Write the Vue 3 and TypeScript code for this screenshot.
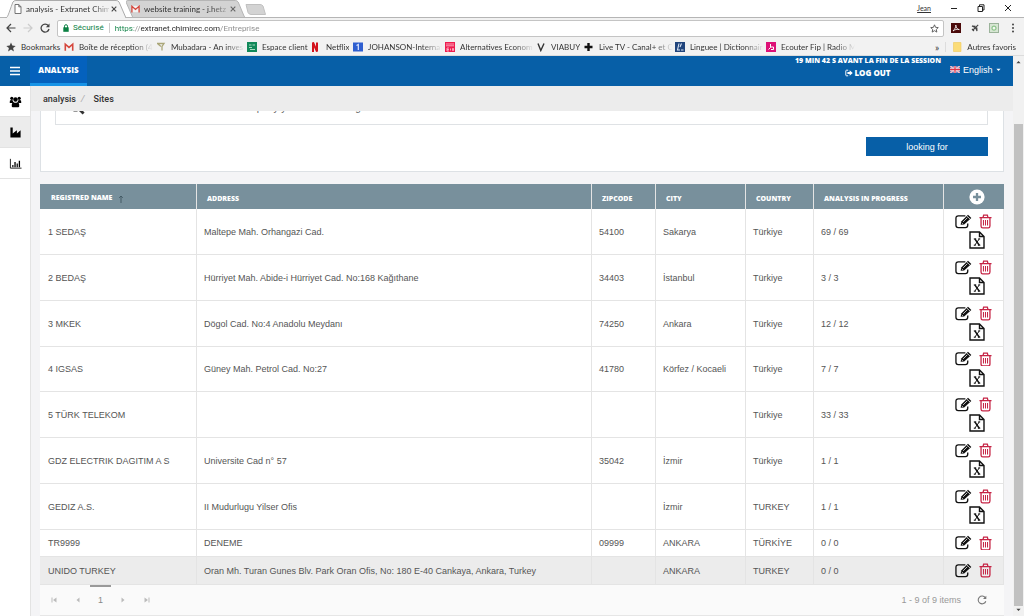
<script setup lang="ts">
import { ref } from 'vue'

interface Bookmark {
  icon: string
  label: string
}

interface Site {
  name: string
  address: string
  zip: string
  city: string
  country: string
  progress: string
  exportable: boolean
}

const url = ref('https://extranet.chimirec.com/Entreprise')
const search = ref('')
const language = ref('English')

const bookmarks: Bookmark[] = [
  { icon: 'star', label: 'Bookmarks' },
  { icon: 'gmail', label: 'Boîte de réception (4' },
  { icon: 'funnel', label: 'Mubadara - An inves' },
  { icon: 'bank', label: 'Espace client' },
  { icon: 'netflix', label: 'Netflix' },
  { icon: 'johanson', label: 'JOHANSON-Internat' },
  { icon: 'eco', label: 'Alternatives Econom' },
  { icon: 'viabuy', label: 'VIABUY' },
  { icon: 'plus', label: 'Live TV - Canal+ et C' },
  { icon: 'linguee', label: 'Linguee | Dictionnair' },
  { icon: 'fip', label: 'Ecouter Fip | Radio M' },
]

const columns = ['Address', 'Zipcode', 'City', 'Country', 'Analysis in progress']

const sites: Site[] = [
  { name: '1 SEDAŞ', address: 'Maltepe Mah. Orhangazi Cad.', zip: '54100', city: 'Sakarya', country: 'Türkiye', progress: '69 / 69', exportable: true },
  { name: '2 BEDAŞ', address: 'Hürriyet Mah. Abide-i Hürriyet Cad. No:168 Kağıthane', zip: '34403', city: 'İstanbul', country: 'Türkiye', progress: '3 / 3', exportable: true },
  { name: '3 MKEK', address: 'Dögol Cad. No:4 Anadolu Meydanı', zip: '74250', city: 'Ankara', country: 'Türkiye', progress: '12 / 12', exportable: true },
  { name: '4 IGSAS', address: 'Güney Mah. Petrol Cad. No:27', zip: '41780', city: 'Körfez / Kocaeli', country: 'Türkiye', progress: '7 / 7', exportable: true },
  { name: '5 TÜRK TELEKOM', address: '', zip: '', city: '', country: 'Türkiye', progress: '33 / 33', exportable: true },
  { name: 'GDZ ELECTRIK DAGITIM A S', address: 'Universite Cad n° 57', zip: '35042', city: 'İzmir', country: 'Türkiye', progress: '1 / 1', exportable: true },
  { name: 'GEDIZ A.S.', address: 'II Mudurlugu Yilser Ofis', zip: '', city: 'İzmir', country: 'TURKEY', progress: '1 / 1', exportable: true },
  { name: 'TR9999', address: 'DENEME', zip: '09999', city: 'ANKARA', country: 'TÜRKİYE', progress: '0 / 0', exportable: false },
  { name: 'UNIDO TURKEY', address: 'Oran Mh. Turan Gunes Blv. Park Oran Ofis, No: 180 E-40 Cankaya, Ankara, Turkey', zip: '', city: 'ANKARA', country: 'TURKEY', progress: '0 / 0', exportable: false },
]
</script>

<template>
  <div class="browser">
    <div class="titlebar">
      <div class="tab active">
        <svg class="tab-shape" viewBox="0 0 122 18" preserveAspectRatio="none" aria-hidden="true"><path d="M0 18C3 18 3 15 8 2Q9 0.5 11 0.5H112Q114 0.5 115 2L122 18" fill="#f2f2f2" stroke="#a9a9a9" /></svg>
        <svg class="tab-icon document" viewBox="0 0 8 10" aria-hidden="true"><path d="M1 .5H4.800L7 2.800V9.500H1ZM4.800 .5V2.800H7" fill="#fff" stroke="#666" stroke-width=".9" /></svg>
        <button class="tab-title">analysis - Extranet Chim</button>
        <button class="tab-close" aria-label="Close tab"><svg viewBox="0 0 6 6"><path d="M.7 .7 5.300 5.300M5.300 .7 .7 5.300" stroke="#444" stroke-width="1.100" /></svg></button>
      </div>
      <div class="tab">
        <svg class="tab-shape" viewBox="0 0 122 18" preserveAspectRatio="none" aria-hidden="true"><path d="M7 17.500L0 2Q0 .5 2 .5H112Q114 .5 115 2L121 16Q122 17.500 122 17.500Z" fill="#d3d3d3" stroke="#b4b4b4" /></svg>
        <svg class="tab-icon" viewBox="0 0 10 8" aria-hidden="true"><rect x=".5" y=".5" width="9" height="7" fill="#f3f3f3" /><path d="M1 8V1L5 4.500 9 1V8" fill="none" stroke="#d5473c" stroke-width="1.500" /></svg>
        <button class="tab-title">website training - j.hetz</button>
        <button class="tab-close" aria-label="Close tab"><svg viewBox="0 0 6 6"><path d="M.7 .7 5.300 5.300M5.300 .7 .7 5.300" stroke="#666" stroke-width="1.100" /></svg></button>
      </div>
      <button class="new-tab" aria-label="New tab"><svg viewBox="0 0 21 11"><path d="M1 .5H15Q17 .5 18 2L20.500 10.500H6Q4 10.500 3 8.500Z" fill="#d3d3d3" stroke="#c0c0c0" /></svg></button>
      <div class="window-buttons">
        <button class="account">Jean</button>
        <button aria-label="Minimise"><svg viewBox="0 0 8 8"><path d="M1 4.500H7" stroke="#222" /></svg></button>
        <button aria-label="Restore"><svg viewBox="0 0 8 8"><path d="M1 2.500H5.500V7.500H1ZM2.500 2.500V.800H7V6H5.500" fill="none" stroke="#222" /></svg></button>
        <button aria-label="Close"><svg viewBox="0 0 8 8"><path d="M1 1 7 7M7 1 1 7" stroke="#222" /></svg></button>
      </div>
    </div>

    <div class="toolbar">
      <button aria-label="Back"><svg viewBox="0 0 10 10"><path d="M9.500 5H1M5 1 1 5 5 9" fill="none" stroke="#444" stroke-width="1.200" /></svg></button>
      <button aria-label="Forward"><svg viewBox="0 0 10 10"><path d="M.5 5H9M5 1 9 5 5 9" fill="none" stroke="#ccc" stroke-width="1.200" /></svg></button>
      <button aria-label="Reload"><svg viewBox="0 0 10 10"><path d="M8.300 2.700A4 4 0 1 0 9 6" fill="none" stroke="#444" stroke-width="1.300" /><path d="M9.500 .5V4.200H5.800Z" fill="#444" /></svg></button>
      <div class="omnibox">
        <svg class="lock" viewBox="0 0 6 8" aria-hidden="true"><path d="M1.500 4V2.200a1.500 1.500 0 0 1 3 0V4" fill="none" stroke="#0b8043" /><rect x=".3" y="3.300" width="5.400" height="4.500" fill="#0b8043" /></svg>
        <span class="secure">Sécurisé</span>
        <input v-model="url" class="url" aria-label="Address" />
        <button class="fav" aria-label="Bookmark this page"><svg viewBox="0 0 10 10"><path d="M5 .9 6.200 3.700 9.200 4 7 6 7.600 9 5 7.400 2.400 9 3 6 .8 4 3.800 3.700Z" fill="none" stroke="#555" /></svg></button>
      </div>
      <div class="extensions">
        <button aria-label="Acrobat"><svg viewBox="0 0 10 10"><rect width="10" height="10" fill="#4a0a0a" /><path d="M2 8C4 6 5 4 4.800 2C5 5 6.500 6.500 8.300 6.600C6 6 4 6.500 2 8Z" fill="none" stroke="#fff" stroke-width=".8" /></svg></button>
        <button aria-label="Travel"><svg viewBox="0 0 10 10"><path d="M8.200 1.800 2.500 7.500M5 4.500 2 3 5.500 3.200M5.500 4.500 7 8 6.800 4.500M2 6 4 8" fill="none" stroke="#444" stroke-width="1.100" /></svg></button>
        <button aria-label="Capture"><svg viewBox="0 0 10 10"><rect x=".5" y=".5" width="9" height="9" fill="#d7e6d3" stroke="#9bb39a" /><circle cx="5" cy="5.200" r="2" fill="#f3f8f1" stroke="#8cc38a" stroke-width="1.200" /></svg></button>
        <button aria-label="Menu"><svg viewBox="0 0 10 10"><g fill="#444"><circle cx="5" cy="1.500" r="1" /><circle cx="5" cy="5" r="1" /><circle cx="5" cy="8.500" r="1" /></g></svg></button>
      </div>
    </div>

    <nav class="bookmarks" aria-label="Bookmarks">
      <a v-for="b in bookmarks" :key="b.label" href="#" class="bookmark">
        <svg viewBox="0 0 10 10" aria-hidden="true">
          <path v-if="b.icon === 'star'" d="M5 .5 6.300 3.600 9.700 3.900 7.100 6.100 7.900 9.400 5 7.600 2.100 9.400 2.900 6.100 .3 3.900 3.700 3.600Z" fill="#444" />
          <g v-else-if="b.icon === 'gmail'"><rect x="1" y="1.500" width="8" height="7" fill="#f5f5f5" /><path d="M1.300 8.800V2.200L5 5.400 8.700 2.200V8.800" fill="none" stroke="#d5473c" stroke-width="1.600" /></g>
          <path v-else-if="b.icon === 'funnel'" d="M1 1.500H8L6 4.500V8.500M2 2 5 4.500" fill="none" stroke="#aaa678" stroke-width="1.300" />
          <g v-else-if="b.icon === 'bank'"><rect width="10" height="10" fill="#12895a" /><path d="M2 3H4.500M5.500 3H8M2 5.500H5M3 7.500H8" stroke="#a9dcc3" /></g>
          <path v-else-if="b.icon === 'netflix'" d="M2 10V.5L6 9.500V.5" fill="none" stroke="#d3121c" stroke-width="2" />
          <g v-else-if="b.icon === 'johanson'"><rect y=".5" width="10" height="9" fill="#2f5fd0" /><path d="M3.500 3.500 5.300 2.500V8" fill="none" stroke="#dfe8ff" stroke-width="1.200" /></g>
          <g v-else-if="b.icon === 'eco'"><rect width="10" height="10" fill="#ee1c4e" /><path d="M1 2H9M1 3.800H9M2 6H4M2 6V9H4M2 7.500H4M5.500 6.500V8.500M7.500 6.500H8.500V8.500H7.500Z" fill="none" stroke="#ffc4d2" stroke-width=".8" /></g>
          <path v-else-if="b.icon === 'viabuy'" d="M2 1.500 4.800 8.500 8 1.500" fill="none" stroke="#333" stroke-width="1.400" />
          <path v-else-if="b.icon === 'plus'" d="M4.500 1V9M.5 5H8.500" stroke="#111" stroke-width="2.400" />
          <g v-else-if="b.icon === 'linguee'"><rect width="10" height="10" fill="#21457c" /><path d="M4 1.500 2.500 8H5M6.500 1.500 5 5M6 8H8.500" fill="none" stroke="#dce7f5" stroke-width="1.100" /></g>
          <g v-else><rect width="10" height="10" fill="#dd1177" /><path d="M4.500 2V5.500L2.500 7.500M4.500 5H7.500V7.500H5" fill="none" stroke="#fff" /></g>
        </svg>
        <span>{{ b.label }}</span>
      </a>
      <div class="bookmarks-end">
        <button class="more" aria-label="More bookmarks">»</button>
        <a href="#" class="bookmark other">
          <svg viewBox="0 0 10 10" aria-hidden="true"><path d="M1.500 .5H9V9.500H1.500Z" fill="#fbdc78" stroke="#f0ca5a" stroke-width=".6" /></svg>
          <span>Autres favoris</span>
        </a>
      </div>
    </nav>

    <div class="viewport">
      <div class="app">
        <header class="topbar">
          <button class="burger" aria-label="Toggle menu"><svg viewBox="0 0 10 10"><path d="M0 1.500H10M0 5H10M0 8.500H10" stroke="#fff" stroke-width="1.700" /></svg></button>
          <a href="#" class="module">Analysis</a>
          <div class="session">
            <span>19 min 42 s avant la fin de la session</span>
            <a href="#"><svg viewBox="0 0 10 10" aria-hidden="true"><path d="M4 1.500H1.800Q1 1.500 1 2.500V7.500Q1 8.500 1.800 8.500H4" fill="none" stroke="#fff" stroke-width="1.200" /><path d="M3 3.800H5.800V1.500L9.700 5 5.800 8.500V6.200H3Z" fill="#fff" /></svg>Log out</a>
          </div>
          <div class="language">
            <svg class="flag" viewBox="0 0 10 7" aria-hidden="true"><rect width="10" height="7" fill="#5b6fb5" /><path d="M0 0 10 7M10 0 0 7" stroke="#fff" stroke-width="1.400" /><path d="M0 0 10 7M10 0 0 7" stroke="#e0485a" stroke-width=".5" /><path d="M5 0V7M0 3.500H10" stroke="#fff" stroke-width="2.400" /><path d="M5 0V7M0 3.500H10" stroke="#e0344a" stroke-width="1.300" /></svg>
            <select v-model="language" aria-label="Language"><option>English</option></select>
            <svg class="caret" viewBox="0 0 6 4" aria-hidden="true"><path d="M.5 .5H5.500L3 3.300Z" fill="#fff" /></svg>
          </div>
        </header>

        <div class="body">
          <nav class="side" aria-label="Sections">
            <a href="#" aria-label="Users"><svg viewBox="0 0 14 14"><circle cx="3" cy="3.600" r="1.700" /><circle cx="11" cy="3.600" r="1.700" /><circle cx="7" cy="4.800" r="2.400" /><path d="M.8 8.500Q.5 5.500 2 5.500L4 5.700Q4.200 7.300 5 7.800L3.500 8.500ZM13.200 8.500Q13.500 5.500 12 5.500L10 5.700Q9.800 7.300 9 7.800L10.500 8.500ZM3 12.500Q2.600 8 5 7.800Q7 9 9 7.800Q11.400 8 11 12.500Q10.800 13.200 10 13.200H4Q3.200 13.200 3 12.500Z" /></svg></a>
            <a href="#" class="current" aria-label="Sites"><svg viewBox="0 0 14 14"><path d="M1.500 1.500H4V8L8.500 4.500V8L12.500 4.500V12.500H1.500Z" /></svg></a>
            <a href="#" aria-label="Statistics"><svg viewBox="0 0 14 14"><path d="M1.500 2V12H13.500" fill="none" stroke="#000" stroke-width=".9" /><path d="M3.500 8.500H4.800V11H3.500ZM5.800 5.500H7.200V11H5.800ZM8.200 7H9.500V11H8.200ZM10.500 4H11.900V11H10.500Z" /></svg></a>
          </nav>

          <div class="page">
            <nav class="crumbs" aria-label="Breadcrumb"><a href="#">analysis</a><i>/</i><span>Sites</span></nav>

            <main class="content">
              <form class="panel" @submit.prevent>
                <label class="search">
                  <svg viewBox="0 0 16 16" aria-hidden="true"><circle cx="6.500" cy="6.500" r="5" fill="none" stroke="#333" stroke-width="2.200" /><path d="M10 10 14.600 14.600" stroke="#333" stroke-width="2.800" /></svg>
                  <input v-model="search" type="text" aria-label="Search" placeholder="Enter the name of the company you are searching" />
                </label>
                <button type="submit" class="submit">looking for</button>
              </form>

              <section class="grid">
                <table>
                  <colgroup><col class="c-name" /><col /><col class="c-zip" /><col class="c-city" /><col class="c-country" /><col class="c-progress" /><col class="c-actions" /></colgroup>
                  <thead>
                    <tr>
                      <th scope="col">Registred name<svg class="sort" viewBox="0 0 6 8" aria-hidden="true"><path d="M3 8V1M1.200 2.800 3 1 4.800 2.800" fill="none" stroke="#3f5661" stroke-width=".9" /></svg></th>
                      <th v-for="c in columns" :key="c" scope="col">{{ c }}</th>
                      <th scope="col" class="add"><button aria-label="Add site"><svg viewBox="0 0 16 16"><circle cx="8" cy="8" r="7.600" fill="#fff" /><path d="M8 4V12M4 8H12" stroke="#78909c" stroke-width="2.300" /></svg></button></th>
                    </tr>
                  </thead>
                  <tbody>
                    <tr v-for="s in sites" :key="s.name" :class="{ tall: s.exportable }">
                      <td>{{ s.name }}</td>
                      <td>{{ s.address }}</td>
                      <td>{{ s.zip }}</td>
                      <td>{{ s.city }}</td>
                      <td>{{ s.country }}</td>
                      <td>{{ s.progress }}</td>
                      <td class="actions">
                        <div>
                          <button class="edit" aria-label="Edit"><svg viewBox="0 0 18 16"><path d="M11 2H3.500Q1 2 1 4.500V12Q1 14.500 3.500 14.500H11Q13.500 14.500 13.500 12V10" fill="none" stroke="#111" stroke-width="1.400" /><path d="M6 11.300 6.600 8 13.800 .900 17.300 4.200 9.700 11Z" fill="#111" /><path d="M8.600 8.400 13 4M12.600 2.200 15.900 5.300M7.200 9.300 8.300 10.400" stroke="#fff" stroke-width=".8" /></svg></button>
                          <button class="trash" aria-label="Delete"><svg viewBox="0 0 14 16"><path d="M.5 4H13.500M4.300 4 5 1.300H9L9.700 4M2.200 4V13Q2.200 15 4 15H10Q11.800 15 11.800 13V4" fill="none" stroke="#c62445" stroke-width="1.400" /><path d="M4.800 6.500V12.500M7 6.500V12.500M9.200 6.500V12.500" stroke="#c62445" stroke-width="1.100" /></svg></button>
                          <button v-if="s.exportable" class="file" aria-label="Export to Excel"><svg viewBox="0 0 16 18"><path d="M1 1H10.500L15 5.500V17H1ZM10.500 1V5.500H15" fill="none" stroke="#111" stroke-width="1.400" /><path d="M5.800 7.900 10.300 14.200" stroke="#111" stroke-width="1.500" /><path d="M10.300 7.900 5.800 14.200M4.800 7.900H7.200M9.200 7.900H11.200M4.800 14.200H6.800M8.900 14.200H11.300" stroke="#111" stroke-width="1" /></svg></button>
                        </div>
                      </td>
                    </tr>
                  </tbody>
                </table>
                <footer class="pager">
                  <button aria-label="First page"><svg viewBox="0 0 6 6"><path d="M1 .5V5.500" stroke="#bbb" /><path d="M5.500 .5V5.500L2 3Z" fill="#bbb" /></svg></button>
                  <button aria-label="Previous page"><svg viewBox="0 0 6 6"><path d="M4.500 .5V5.500L1.500 3Z" fill="#bbb" /></svg></button>
                  <button class="number">1</button>
                  <button aria-label="Next page"><svg viewBox="0 0 6 6"><path d="M1.500 .5V5.500L4.500 3Z" fill="#bbb" /></svg></button>
                  <button aria-label="Last page"><svg viewBox="0 0 6 6"><path d="M5 .5V5.500" stroke="#bbb" /><path d="M.5 .5V5.500L4 3Z" fill="#bbb" /></svg></button>
                  <span class="count">1 - 9 of 9 items</span>
                  <button class="refresh" aria-label="Refresh"><svg viewBox="0 0 10 10"><path d="M8.300 2.700A3.900 3.900 0 1 0 8.800 6.200" fill="none" stroke="#777" stroke-width="1.100" /><path d="M9.300 .8V4H6Z" fill="#777" /></svg></button>
                </footer>
              </section>
            </main>
          </div>
        </div>
      </div>

      <div class="scrollbar" aria-hidden="true">
        <svg viewBox="0 0 6 4"><path d="M.5 3.500H5.500L3 .8Z" fill="#444" /></svg>
        <div class="track"><div class="thumb"></div></div>
        <svg viewBox="0 0 6 4"><path d="M.5 .5H5.500L3 3.200Z" fill="#444" /></svg>
      </div>
    </div>
  </div>
</template>

<style>
html,
body {
  background: #fff;
}
</style>

<style scoped>
* {
  box-sizing: border-box;
}
.browser {
  display: flex;
  flex-direction: column;
  height: 100vh;
  overflow: hidden;
  font-family: Lato, "Noto Sans", sans-serif;
  font-size: 8px;
  color: #333;
}
button,
input,
select {
  margin: 0;
  padding: 0;
  border: 0;
  background: none;
  font: inherit;
  color: inherit;
  outline: none;
}
a {
  color: inherit;
  text-decoration: none;
}
svg {
  display: block;
  flex: none;
}

/* Title bar */
.titlebar {
  display: flex;
  height: 18px;
  padding-left: 5px;
  border-bottom: 1px solid #b5b5b5;
}
.tab {
  position: relative;
  display: flex;
  align-items: center;
  width: 119px;
  height: 18px;
  padding: 0 7px 0 5px;
}
.tab.active {
  z-index: 1;
  width: 121px;
  padding-left: 9px;
}
.tab-shape {
  position: absolute;
  inset: 0;
  width: 100%;
  height: 100%;
}
.tab-icon {
  position: relative;
  width: 9px;
  height: 8px;
}
.tab-icon.document {
  width: 8px;
  height: 10px;
}
.tab-title {
  position: relative;
  flex: 1;
  min-width: 0;
  margin: 0 2px 0 4px;
  white-space: nowrap;
  text-align: left;
  mask-image: linear-gradient(90deg, #000 66px, transparent 88px);
}
.tab-close {
  position: relative;
  width: 6px;
  margin-right: 2px;
}
.new-tab {
  width: 21px;
  height: 11px;
  margin-top: 4px;
}
.window-buttons {
  display: flex;
  align-items: center;
  gap: 19px;
  height: 16px;
  margin-left: auto;
  padding-right: 12px;
}
.window-buttons svg {
  width: 8px;
}
.account {
  font-size: 7px;
  text-decoration: underline;
}

/* Toolbar */
.toolbar {
  display: flex;
  align-items: center;
  gap: 7px;
  height: 20px;
  padding: 0 6px;
  background: #f2f2f2;
}
.toolbar > button svg {
  width: 10px;
}
.omnibox {
  display: flex;
  flex: 1;
  align-items: center;
  height: 17px;
  padding: 0 4px 0 5px;
  border: 1px solid #c4c4c4;
  border-radius: 2px;
  background: #fff;
  font-family: Roboto, sans-serif;
}
.lock {
  width: 6px;
  height: 8px;
}
.secure {
  margin: 0 5px 0 4px;
  padding-right: 5px;
  border-right: 1px solid #ccc;
  line-height: 10px;
  color: #0b8043;
}
.url {
  flex: 1;
  min-width: 0;
  background: linear-gradient(90deg, #0b8043 19px, #888 19px, #888 26px, #222 26px, #222 105px, #888 105px);
  background-clip: text;
  color: transparent;
}
.fav svg {
  width: 9px;
}
.extensions {
  display: flex;
  gap: 9px;
}
.extensions svg {
  width: 10px;
}

/* Bookmark bar */
.bookmarks {
  display: grid;
  grid-template-columns: 58px 92px 91px 64px 42px 92px 91px 48px 91px 91px 91px 1fr;
  align-items: center;
  height: 18px;
  padding: 0 8px 0 6px;
  border-bottom: 1px solid #dcdcdc;
  background: #f2f2f2;
}
.bookmark {
  display: flex;
  align-items: center;
  gap: 5px;
  min-width: 0;
}
.bookmark svg {
  width: 10px;
}
.bookmark span {
  white-space: nowrap;
}
.bookmark:nth-child(n + 2) span {
  mask-image: linear-gradient(90deg, #000 54px, transparent 74px);
}
.bookmarks-end {
  display: flex;
  align-items: center;
  justify-content: flex-end;
}
.more {
  padding-right: 6px;
  border-right: 1px solid #ddd;
  font-size: 10px;
  line-height: 10px;
}
.other {
  padding: 0 0 0 6px;
}

/* Application frame */
.viewport {
  display: flex;
  flex: 1;
  min-height: 0;
  font-family: "Liberation Sans", Arial, sans-serif;
  font-size: 9px;
}
.app {
  display: flex;
  flex: 1;
  flex-direction: column;
  min-width: 0;
}
.topbar {
  display: flex;
  height: 30px;
  background: #075fa7;
  color: #fff;
}
.burger {
  display: grid;
  place-items: center;
  width: 30px;
}
.burger svg {
  width: 10px;
}
.module {
  display: grid;
  place-items: center;
  width: 57px;
  border-bottom: 3px solid #1793e6;
  background: #0461bd;
  font-family: "Open Sans", sans-serif;
  font-size: 8px;
  font-weight: 800;
  text-transform: uppercase;
}
.session {
  display: flex;
  flex-direction: column;
  align-items: center;
  margin-left: auto;
  font-family: "Open Sans", sans-serif;
  font-size: 7px;
  font-weight: 800;
  line-height: 13px;
  text-transform: uppercase;
  white-space: nowrap;
}
.session span {
  line-height: 10px;
}
.session a {
  display: flex;
  align-items: center;
  gap: 1px;
  font-size: 8px;
}
.session svg {
  width: 8px;
}
.language {
  display: flex;
  align-items: center;
  gap: 3px;
  height: 27px;
  margin: 0 12px 0 9px;
}
.flag {
  width: 10px;
  height: 7px;
}
.language select {
  appearance: none;
}
.language option {
  color: #333;
}
.caret {
  width: 5px;
  height: 4px;
}
.body {
  display: flex;
  flex: 1;
  min-height: 0;
}
.side {
  width: 31px;
  border-right: 1px solid #e3e3e3;
  background: #fff;
}
.side a {
  display: grid;
  place-items: center;
  height: 31px;
  border-bottom: 1px solid #e3e3e3;
}
.side .current {
  background: #ececec;
}
.side svg {
  width: 13px;
}
.page {
  display: flex;
  flex: 1;
  flex-direction: column;
  min-width: 0;
  background: #f4f4f6;
}
.crumbs {
  display: flex;
  flex: none;
  align-items: center;
  height: 25px;
  padding-left: 12px;
  background: #ececec;
  font-family: Roboto, sans-serif;
  font-weight: 500;
}
.crumbs i {
  margin: 0 9px 0 5px;
  font-weight: 400;
  color: #aaa;
}
.content {
  display: flex;
  flex: 1;
  flex-direction: column;
  justify-content: flex-end;
  gap: 12px;
  min-height: 0;
  overflow: hidden;
  padding: 0 9px;
}

/* Search panel */
.panel {
  display: flex;
  flex: none;
  flex-direction: column;
  align-items: flex-end;
  gap: 12px;
  padding: 15px 15px 15px 14px;
  border: 1px solid #dde1e5;
  background: #fff;
}
.search {
  display: flex;
  align-items: center;
  align-self: stretch;
  height: 32px;
  padding: 0 0 4px 13px;
  border: 1px solid #dfe2e5;
}
.search svg {
  width: 16px;
}
.search input {
  flex: 1;
  padding-left: 54px;
  font-size: 10px;
}
.search input::placeholder {
  color: #666;
}
.submit {
  width: 122px;
  height: 19px;
  background: #075fa7;
  color: #fff;
}

/* Sites table */
.grid {
  flex: none;
  border-bottom: 1px solid #e6e6e6;
}
table {
  width: 100%;
  border-collapse: separate;
  border-spacing: 0;
  table-layout: fixed;
  background: #fff;
}
.c-name {
  width: 157px;
}
.c-zip {
  width: 64px;
}
.c-city {
  width: 90px;
}
.c-country {
  width: 68px;
}
.c-progress {
  width: 130px;
}
.c-actions {
  width: 60px;
}
th,
td {
  border-right: 1px solid #e4e4e4;
  text-align: left;
  white-space: nowrap;
}
th {
  height: 25px;
  padding: 3px 0 0 10px;
  background: #78909c;
  color: #fff;
  font-family: "Open Sans", sans-serif;
  font-size: 7px;
  font-weight: 800;
  text-transform: uppercase;
}
th:last-child {
  border-right: 0;
}
.sort {
  display: inline-block;
  width: 6px;
  height: 8px;
  margin-left: 6px;
  vertical-align: middle;
}
.add {
  padding: 0 0 0 6px;
}
.add button {
  display: block;
  width: 16px;
  margin: 0 auto;
}
td {
  height: 27px;
  padding: 0 0 0 7px;
  border-bottom: 1px solid #e4e4e4;
  color: #555;
}
th:first-child {
  padding-left: 11px;
}
td:first-child {
  padding-left: 8px;
}
.tall td {
  height: 46px;
}
.tall:nth-child(4) td {
  height: 45px;
}
tbody tr:last-child td {
  height: 28px;
  background: #ececec;
}
.actions {
  padding: 0 0 0 6px;
}
.actions div {
  display: flex;
  flex-wrap: wrap;
  justify-content: center;
  row-gap: 2px;
}
.edit {
  width: 17px;
  margin-right: 7px;
}
.trash {
  width: 13px;
  margin-right: 6px;
}
.file {
  width: 16px;
}
.pager {
  display: flex;
  align-items: center;
  height: 30px;
  padding: 0 10px 0 2px;
  background: #fafafa;
  color: #888;
}
.pager button {
  display: grid;
  place-items: center;
  width: 24px;
  height: 30px;
}
.pager svg {
  width: 6px;
}
.pager .number {
  width: 21px;
  padding-bottom: 2px;
  border-top: 2px solid #999;
}
.count {
  margin-left: auto;
  padding-right: 9px;
  color: #999;
}
.pager .refresh svg {
  width: 10px;
}

/* Page scrollbar */
.scrollbar {
  display: flex;
  flex-direction: column;
  align-items: center;
  width: 11px;
  padding: 4px 0;
  background: #f1f1f1;
}
.scrollbar svg {
  width: 5px;
  height: 4px;
}
.track {
  display: flex;
  flex: 1;
  flex-direction: column;
  justify-content: flex-end;
  align-self: stretch;
  padding: 0 1px 2px;
}
.thumb {
  height: 89%;
  background: #c1c1c1;
}
</style>
